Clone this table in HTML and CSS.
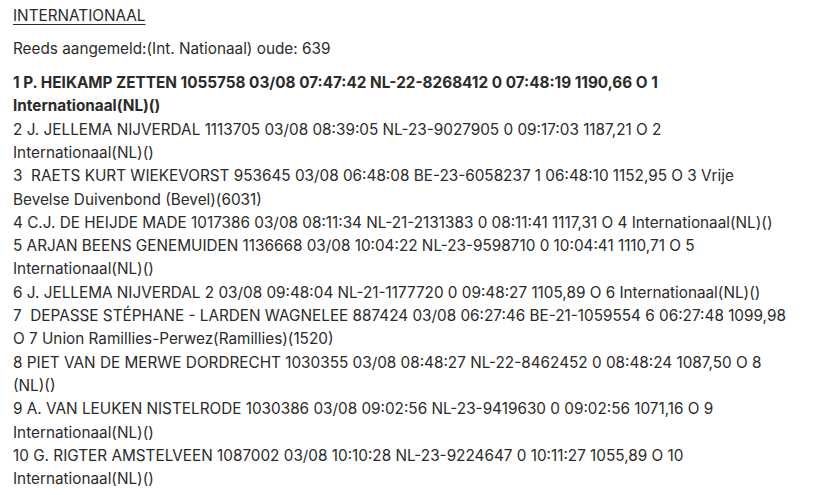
FILE: index.html
```html
<!DOCTYPE html>
<html lang="nl">
<head>
<meta charset="utf-8">
<title>Internationaal</title>
<link rel="stylesheet" href="styles.css">
</head>
<body>
<div class="page">
  <p class="title"><u>INTERNATIONAAL</u></p>
  <p class="info">Reeds aangemeld:(Int. Nationaal) oude: 639</p>
  <div class="results">
    <div class="row first">1 P. HEIKAMP ZETTEN 1055758 03/08 07:47:42 NL-22-8268412 0 07:48:19 1190,66 O 1 <span class="nb">Internationaal(NL)()</span></div>
    <div class="row">2 J. JELLEMA NIJVERDAL 1113705 03/08 08:39:05 NL-23-9027905 0 09:17:03 1187,21 O 2 <span class="nb">Internationaal(NL)()</span></div>
    <div class="row">3  RAETS KURT WIEKEVORST 953645 03/08 06:48:08 BE-23-6058237 1 06:48:10 1152,95 O 3 Vrije Bevelse Duivenbond (Bevel)(6031)</div>
    <div class="row">4 C.J. DE HEIJDE MADE 1017386 03/08 08:11:34 NL-21-2131383 0 08:11:41 1117,31 O 4 <span class="nb">Internationaal(NL)()</span></div>
    <div class="row">5 ARJAN BEENS GENEMUIDEN 1136668 03/08 10:04:22 NL-23-9598710 0 10:04:41 1110,71 O 5 <span class="nb">Internationaal(NL)()</span></div>
    <div class="row">6 J. JELLEMA NIJVERDAL 2 03/08 09:48:04 NL-21-1177720 0 09:48:27 1105,89 O 6 <span class="nb">Internationaal(NL)()</span></div>
    <div class="row">7  DEPASSE STÉPHANE - LARDEN WAGNELEE 887424 03/08 06:27:46 BE-21-1059554 6 06:27:48 1099,98 O 7 Union Ramillies-Perwez(Ramillies)(1520)</div>
    <div class="row">8 PIET VAN DE MERWE DORDRECHT 1030355 03/08 08:48:27 NL-22-8462452 0 08:48:24 1087,50 O 8 <span class="nb">(NL)()</span></div>
    <div class="row">9 A. VAN LEUKEN NISTELRODE 1030386 03/08 09:02:56 NL-23-9419630 0 09:02:56 1071,16 O 9 <span class="nb">Internationaal(NL)()</span></div>
    <div class="row">10 G. RIGTER AMSTELVEEN 1087002 03/08 10:10:28 NL-23-9224647 0 10:11:27 1055,89 O 10 <span class="nb">Internationaal(NL)()</span></div>
  </div>
</div>
</body>
</html>
```
FILE: styles.css
```css
html, body {
  margin: 0;
  padding: 0;
  background: #fff;
}
body {
  font-family: Inter, "Noto Sans", sans-serif;
  font-size: 15.3px;
  line-height: 23.3px;
  color: #2b2b2b;
}
.page {
  padding: 4px 8px 0 13px;
  width: 780px;
}
.title {
  margin: 0 0 9.5px 0;
}
.info {
  margin: 0 0 11px 0;
}
.title u {
  text-underline-offset: 3px;
  text-decoration-thickness: 1px;
}
.row {
  white-space: pre-wrap;
}
.row.first {
  font-weight: 700;
}
.nb {
  white-space: nowrap;
}
```
